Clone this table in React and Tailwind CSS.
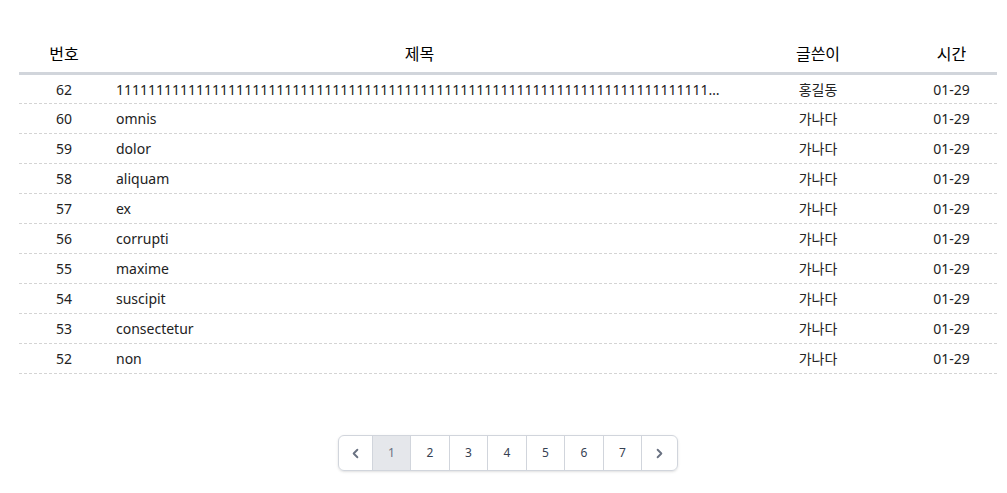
import { ChevronLeft, ChevronRight } from 'lucide-react'

const posts = [
  { id: 62, title: '1'.repeat(80), author: '홍길동', date: '01-29' },
  { id: 60, title: 'omnis', author: '가나다', date: '01-29' },
  { id: 59, title: 'dolor', author: '가나다', date: '01-29' },
  { id: 58, title: 'aliquam', author: '가나다', date: '01-29' },
  { id: 57, title: 'ex', author: '가나다', date: '01-29' },
  { id: 56, title: 'corrupti', author: '가나다', date: '01-29' },
  { id: 55, title: 'maxime', author: '가나다', date: '01-29' },
  { id: 54, title: 'suscipit', author: '가나다', date: '01-29' },
  { id: 53, title: 'consectetur', author: '가나다', date: '01-29' },
  { id: 52, title: 'non', author: '가나다', date: '01-29' },
]

export default function App() {
  return (
    <div className="min-h-screen bg-white pt-[36px] pl-[19px] pr-[10px] font-['Noto_Sans','Noto_Sans_CJK_KR',sans-serif] text-[#222]">
      {/* Header */}
      <div className="flex h-[39px] items-center border-b-[3px] border-[#d1d5db] text-[16px] text-black">
        <div className="w-[90px] text-center">번호</div>
        <div className="flex-1 text-center">제목</div>
        <div className="w-[176px] text-center">글쓴이</div>
        <div className="w-[91px] text-center">시간</div>
      </div>

      {/* Rows */}
      {posts.map((post, i) => (
        <div
          key={post.id}
          className={`flex items-center border-b border-dashed border-[#d4d4d4] text-[14px] ${i === 0 ? 'h-[29px]' : 'h-[30px]'}`}
        >
          <div className="w-[90px] text-center">{post.id}</div>
          <div className="min-w-0 flex-1 truncate pl-[7px] pr-[8px]">{post.title}</div>
          <div className="w-[176px] text-center">{post.author}</div>
          <div className="w-[91px] text-center">{post.date}</div>
        </div>
      ))}

      {/* Pagination */}
      <div className="mt-[61px] flex justify-center">
        <div className="flex h-[36px] overflow-hidden rounded-md border border-gray-300 shadow-sm text-[12px] text-gray-700">
          <button className="flex w-[33px] items-center justify-center text-gray-500">
            <ChevronLeft size={15} strokeWidth={3} />
          </button>
          {[1, 2, 3, 4, 5, 6, 7].map((n) => (
            <button
              key={n}
              className={`flex w-[38.5px] items-center justify-center border-l border-gray-300 ${n === 1 ? 'bg-gray-200 text-gray-500' : ''}`}
            >
              {n}
            </button>
          ))}
          <button className="flex w-[36px] items-center justify-center border-l border-gray-300 text-gray-500">
            <ChevronRight size={15} strokeWidth={3} />
          </button>
        </div>
      </div>
    </div>
  )
}
